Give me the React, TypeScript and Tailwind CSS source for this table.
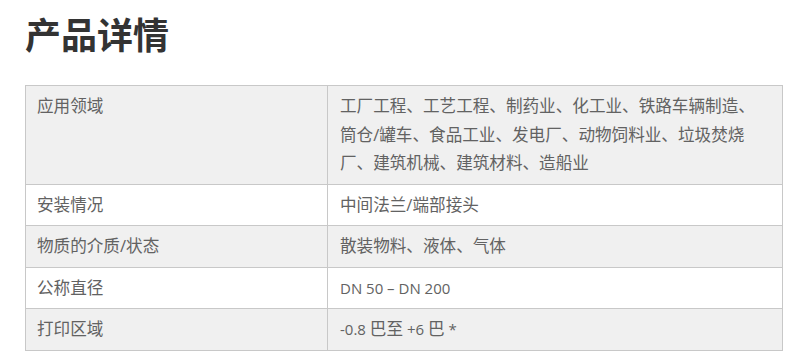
import React from 'react';

const rows: { label: string; value: React.ReactNode }[] = [
  {
    label: '应用领域',
    value: '工厂工程、工艺工程、制药业、化工业、铁路车辆制造、筒仓/罐车、食品工业、发电厂、动物饲料业、垃圾焚烧厂、建筑机械、建筑材料、造船业',
  },
  { label: '安装情况', value: '中间法兰/端部接头' },
  { label: '物质的介质/状态', value: '散装物料、液体、气体' },
  {
    label: '公称直径',
    value: <span className="text-[15px]">DN 50 – DN 200</span>,
  },
  {
    label: '打印区域',
    value: (
      <>
        <span className="text-[15px]">-0.8 </span>巴至<span className="text-[15px]"> +6 </span>巴<span className="text-[15px]"> *</span>
      </>
    ),
  },
];

const App: React.FC = () => {
  return (
    <div className="w-[800px] h-[360px] bg-white overflow-hidden font-['Open_Sans','Noto_Sans_CJK_SC',sans-serif]">
      <div className="pl-[25px] pt-[15px]">
        <h1 className="text-[36px] leading-[36px] font-bold text-[#333333] font-['Noto_Sans_CJK_SC',sans-serif]">
          产品详情
        </h1>
        <div className="mt-[34px] w-[758px] border-l border-t border-[#c8c8c8] grid grid-cols-[302px_455px] text-[16.6px] leading-[28.5px] text-[#626262]">
          {rows.map((row, i) => {
            const bg = i % 2 === 0 ? 'bg-[#f0f0f0]' : 'bg-white';
            return (
              <React.Fragment key={row.label}>
                <div className={`${bg} border-r border-b border-[#c8c8c8] pl-[11px] pr-3 py-[6px]`}>
                  {row.label}
                </div>
                <div className={`${bg} border-r border-b border-[#c8c8c8] px-3 py-[6px]`}>
                  {row.value}
                </div>
              </React.Fragment>
            );
          })}
        </div>
      </div>
    </div>
  );
};

export default App;
